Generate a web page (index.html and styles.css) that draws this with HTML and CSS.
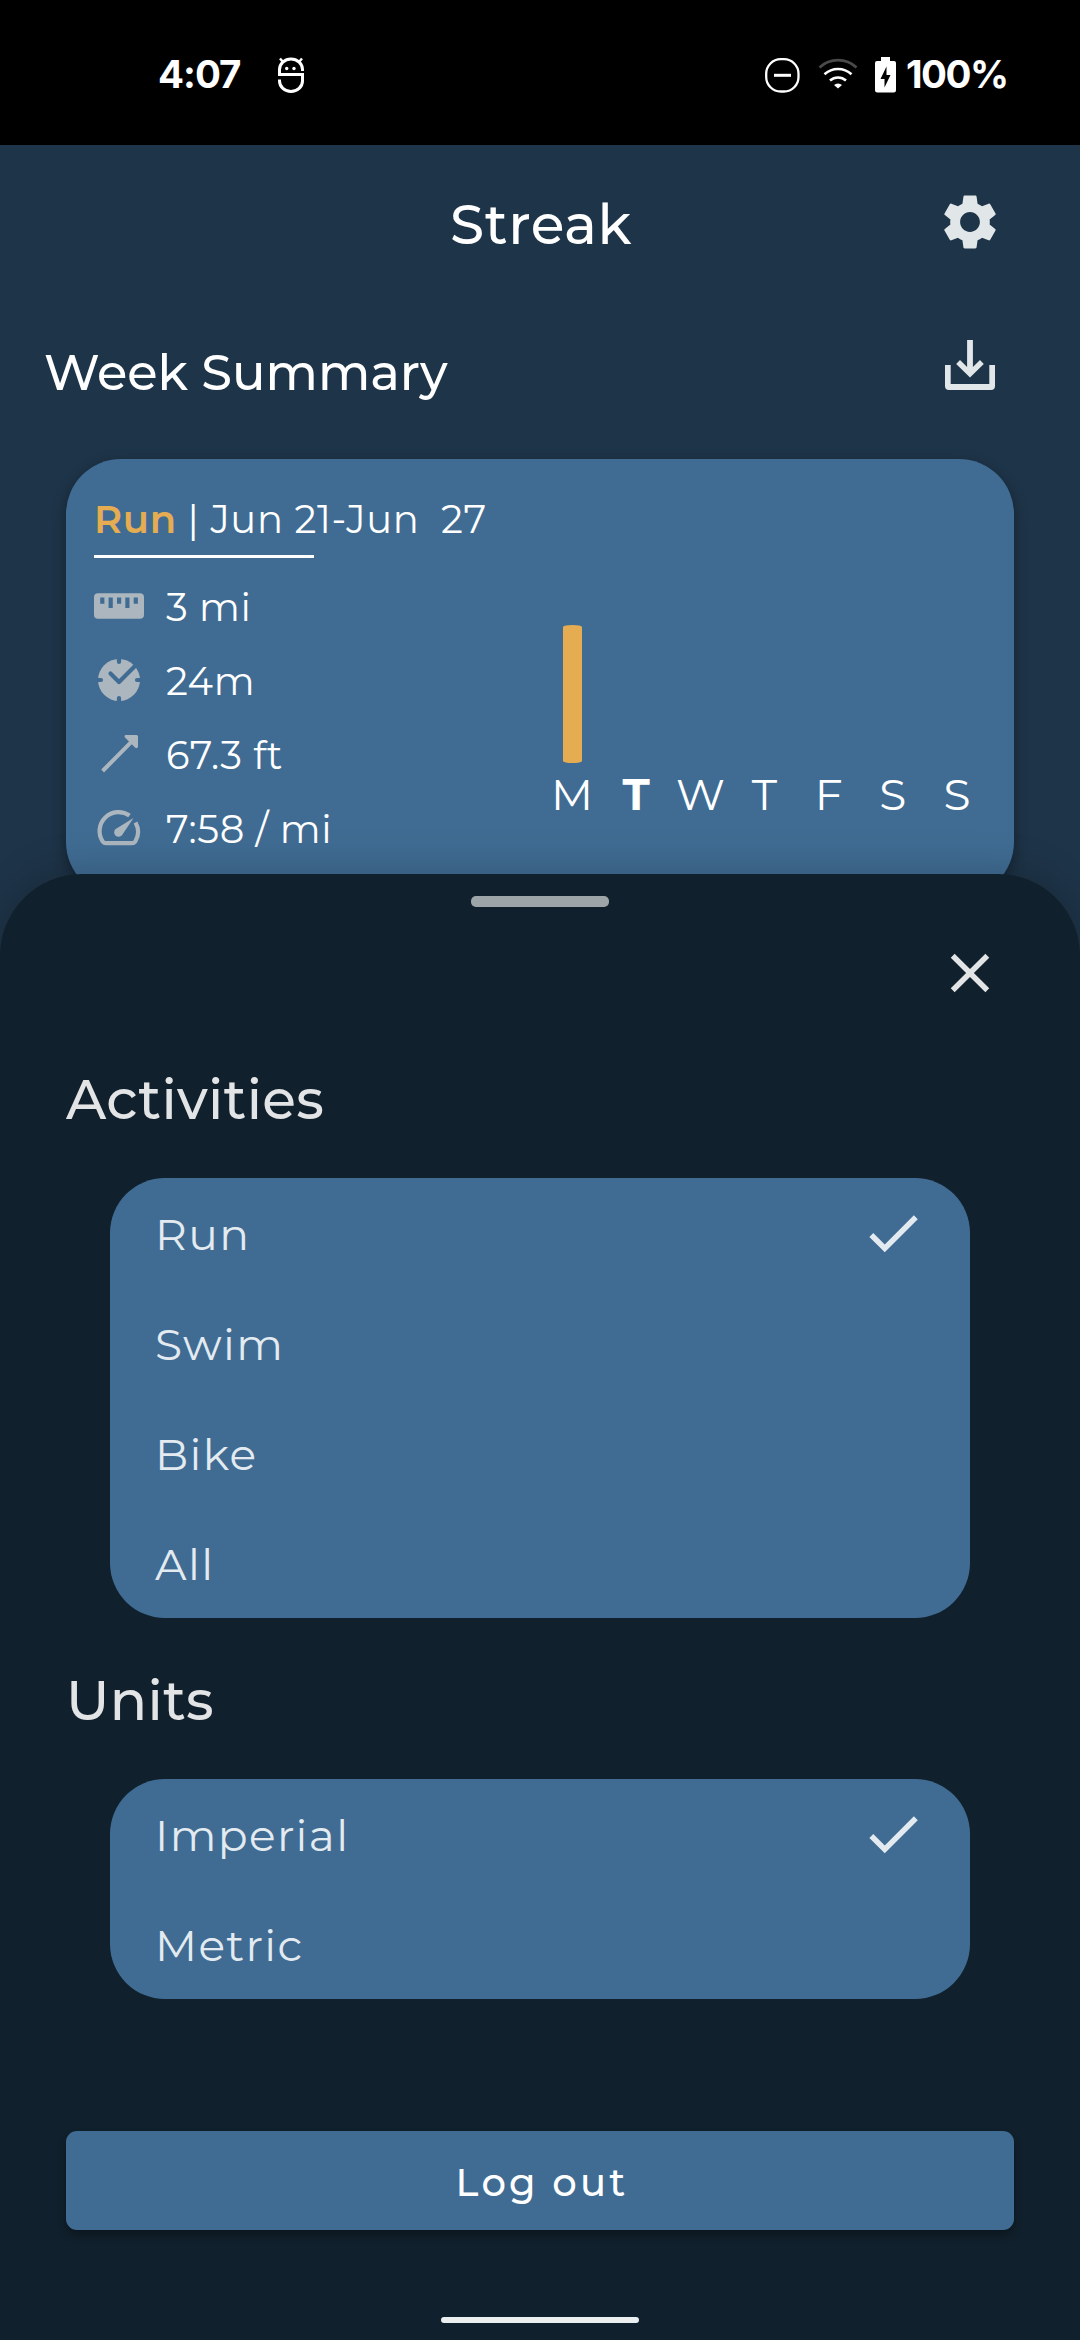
FILE: index.html
```html
<!DOCTYPE html>
<html lang="en">
<head>
<meta charset="utf-8">
<title>Streak</title>
<link rel="stylesheet" href="styles.css">
</head>
<body>
<div class="screen">
  <div class="status">
    <span class="clock">4:07</span>
    <svg class="debug" viewBox="0 0 26 36" width="26" height="36" fill="none" stroke="#fff" stroke-width="3">
      <path d="M24.500 14 V12.500 A11.500 10.500 0 0 0 1.500 12.500 V17.500 H24.500 V24 A11.500 10.500 0 0 1 1.500 24 V22.500"/>
      <path d="M2 1.500 L5.500 5.500 M24 1.500 L20.500 5.500" stroke-width="2.500"/>
      <circle cx="8.700" cy="11.500" r="1.700" fill="#fff" stroke="none"/><circle cx="16" cy="11.500" r="1.700" fill="#fff" stroke="none"/>
    </svg>
    <div class="indicators">
      <svg class="dnd" viewBox="0 0 36 36" width="36" height="36" fill="none" stroke="#fff"><rect x="2.200" y="2.200" width="32.300" height="32.300" rx="14.500" stroke-width="2.300"/><path d="M10 18.300 H27" stroke-width="3"/></svg>
      <svg class="wifi" viewBox="0 0 40 32" width="40" height="32" fill="none" stroke="#fff" stroke-width="2.600">
        <path d="M1.500 9.500 A27 27 0 0 1 38.500 9.500" stroke="#4a4a4a"/>
        <path d="M6.500 16.300 A20 20 0 0 1 33.500 16.300"/><path d="M12 22.500 A12 12 0 0 1 28 22.500"/>
        <path d="M16 27 A6 6 0 0 1 24 27 L20 30.500 Z" fill="#fff" stroke="none"/>
      </svg>
      <svg class="battery" viewBox="0 0 21 36" width="21" height="36"><path fill="#fff" d="M6 0 H15 V4 H19 Q21 4 21 6 V33 Q21 35.500 18.500 35.500 H2.500 Q0 35.500 0 33 V6 Q0 4 2 4 H6Z"/><path d="M11.500 9.500 L5.500 22 H9.500 V30.500 L15.500 18 H11.500Z"/></svg>
      <span class="percent">100%</span>
    </div>
  </div>

  <header class="appbar">
    <h1>Streak</h1>
    <svg class="icon" viewBox="0 0 24 24"><path d="M19.140 12.940c.04-.3.06-.61.06-.94 0-.32-.02-.64-.07-.94l2.030-1.580c.18-.14.23-.41.12-.61l-1.920-3.320c-.12-.22-.37-.29-.59-.22l-2.390.96c-.5-.38-1.030-.7-1.620-.94l-.36-2.540c-.04-.24-.24-.41-.48-.41h-3.840c-.24 0-.43.17-.47.41l-.36 2.540c-.59.24-1.130.57-1.620.94l-2.390-.96c-.22-.08-.47 0-.59.22L2.740 8.870c-.12.21-.08.47.12.61l2.030 1.580c-.05.3-.09.63-.09.94s.02.64.07.94l-2.030 1.580c-.18.14-.23.41-.12.61l1.920 3.320c.12.22.37.29.59.22l2.390-.96c.5.38 1.030.7 1.620.94l.36 2.540c.05.24.24.41.48.41h3.840c.24 0 .44-.17.47-.41l.36-2.540c.59-.24 1.130-.56 1.620-.94l2.390.96c.22.08.47 0 .59-.22l1.920-3.320c.12-.22.07-.47-.12-.61l-2.010-1.580zM12 15.600c-1.980 0-3.600-1.620-3.600-3.600s1.620-3.600 3.600-3.600 3.600 1.620 3.600 3.600-1.620 3.600-3.600 3.600z"/></svg>
  </header>

  <div class="summary-head">
    <h2>Week Summary</h2>
    <svg class="icon" viewBox="0 0 66 66"><path d="M30.100 8 H35.900 V35 L43 28 L46.800 32 L33 45.500 L19.200 32 L23 28 L30.100 35Z"/><path d="M8 33 H13.700 V52 H52.300 V33 H58 V54 Q58 58 54 58 H12 Q8 58 8 54Z"/></svg>
  </div>

  <section class="card">
    <div class="card-title"><b>Run</b> | Jun 21-Jun&nbsp; 27</div>
    <div class="rule"></div>
    <div class="card-body">
      <ul class="stats">
        <li><svg viewBox="0 0 50 50"><path fill-rule="evenodd" d="M4 12.200 H46 Q50 12.200 50 16.200 V33.800 Q50 37.800 46 37.800 H4 Q0 37.800 0 33.800 V16.200 Q0 12.200 4 12.200ZM6.200 16.500v6.300h4.200v-6.300zM14.600 16.500v10.400h4.200v-10.400zM23 16.500v6.300h4.200v-6.300zM31.300 16.500v10.400h4.200v-10.400zM39.700 16.500v6.300h4.200v-6.300z"/></svg>3 mi</li>
        <li><svg viewBox="0 0 50 50"><circle cx="25" cy="25" r="21"/><path class="cut" d="M25 3 V7 M25 43 V47 M3 25 H7 M43 25 H47"/><path class="cut" d="M16.500 18.500 L25 27 L43 9"/></svg>24m</li>
        <li><svg viewBox="0 0 50 50"><path d="M31.500 6 H42.500 Q44 6 44 7.500 V18 Q43 20 41 18.500 L37.800 15.300 L10 43.500 L7.200 40.500 L35 12.500 L31 8.500 Q29.800 6.500 31.500 6Z"/></svg>67.3 ft</li>
        <li><svg viewBox="0 0 50 50"><path class="line" d="M35.500 12.500 A19 19 0 0 0 8.700 38.500 Q10 40.200 12 40.200 H38 Q40 40.200 41.300 38.500 A19 19 0 0 0 41.500 19.500"/><path d="M39.500 15 L21.300 26.300 A4.300 4.300 0 0 0 28 32.300Z"/></svg>7:58 / mi</li>
      </ul>
      <div class="chart">
        <div class="bars"><i class="bar" style="height:138px"></i><i></i><i></i><i></i><i></i><i></i><i></i></div>
        <div class="days"><span>M</span><b>T</b><span>W</span><span>T</span><span>F</span><span>S</span><span>S</span></div>
      </div>
    </div>
  </section>

  <div class="sheet">
    <div class="handle"></div>
    <svg class="icon close" viewBox="0 0 24 24"><path d="M19 6.410 17.590 5 12 10.590 6.410 5 5 6.410 10.590 12 5 17.590 6.410 19 12 13.410 17.590 19 19 17.590 13.410 12z"/></svg>
    <h3>Activities</h3>
    <ul class="options">
      <li>Run<svg viewBox="0 0 24 24"><path d="M9 16.170 4.830 12l-1.420 1.410L9 19 21 7l-1.410-1.410z"/></svg></li>
      <li>Swim</li>
      <li>Bike</li>
      <li>All</li>
    </ul>
    <h3>Units</h3>
    <ul class="options">
      <li>Imperial<svg viewBox="0 0 24 24"><path d="M9 16.170 4.830 12l-1.420 1.410L9 19 21 7l-1.410-1.410z"/></svg></li>
      <li>Metric</li>
    </ul>
    <button class="logout">Log out</button>
    <div class="home"></div>
  </div>
</div>
</body>
</html>
```
FILE: styles.css
```css
* { box-sizing: border-box; }
body { margin: 0; }
h1, h2, h3, ul { margin: 0; padding: 0; font-weight: 500; list-style: none; }
svg { display: block; flex: none; }

.screen {
  position: relative;
  width: 1080px;
  height: 2340px;
  overflow: hidden;
  background: #1e3448;
  color: #fff;
  font-family: Montserrat, Inter, sans-serif;
}

.status {
  display: flex;
  align-items: flex-start;
  height: 145px;
  padding: 57px 72px 0 158px;
  background: #000;
  font: 700 38.5px/34px Inter, sans-serif;
  letter-spacing: -1px;
}
.clock { width: 83px; }
.debug { margin-left: 37px; }
.indicators { display: flex; margin-left: auto; }
.wifi { margin: 1px 0 0 18px; }
.battery { margin-left: 17px; }
.percent { width: 102px; margin-left: 10px; letter-spacing: -1.5px; }

.icon { width: 66px; height: 66px; fill: #e1e6e9; }

.appbar {
  display: grid;
  grid-template-columns: 1fr auto 1fr;
  align-items: center;
  height: 154px;
  padding: 0 77px;
}
.appbar h1 { grid-column: 2; padding: 6px 0 0 2px; font-size: 55px; line-height: 68px; letter-spacing: .6px; }
.appbar .icon { justify-self: end; }

.summary-head {
  display: flex;
  justify-content: space-between;
  align-items: center;
  height: 132px;
  margin-bottom: 28px;
  padding: 0 77px 0 44px;
}
.summary-head h2 { padding-top: 14px; font-size: 49.5px; line-height: 60px; }

.card {
  height: 438px;
  margin: 0 66px;
  padding: 37px 25px 0 28px;
  border-radius: 55px;
  background: #406c93;
  box-shadow: 0 5px 14px rgba(0, 0, 0, .35);
}
.card-title { font-size: 38.5px; line-height: 47px; letter-spacing: .69px; white-space: pre; }
.card-title b { color: #e5ac52; font-weight: 600; }
.rule { width: 220px; height: 3px; margin: 12px 0; background: #fff; }
.card-body { display: flex; justify-content: space-between; height: 296px; }
.stats { font-size: 38.5px; letter-spacing: .6px; font-weight: 400; }
.stats li { display: flex; align-items: center; gap: 22px; height: 74px; font-weight: 400; }
.stats svg { width: 50px; height: 50px; margin-top: -2px; fill: #acb6bf; }
.stats .cut { fill: none; stroke: #406c93; stroke-width: 4.2px; stroke-linecap: round; stroke-linejoin: round; }
.stats .line { fill: none; stroke: #acb6bf; stroke-width: 4.2px; }

.chart { display: flex; flex-direction: column; justify-content: flex-end; width: 449px; padding-bottom: 45px; }
.bars, .days { display: grid; grid-template-columns: repeat(7, 1fr); justify-items: center; align-items: end; }
.bars { margin-bottom: 4px; }
.bar { width: 19px; border-radius: 50% / 2px; background: #e5ac52; }
.days { font-size: 44px; line-height: 54px; }

/* Settings sheet slides up over the page */
.sheet {
  position: absolute;
  inset: 874px 0 0;
  display: flex;
  flex-direction: column;
  align-items: center;
  padding: 22px 66px 17px;
  border-radius: 82px 82px 0 0;
  background: #10202c;
  box-shadow: 0 0 44px rgba(0, 0, 0, .22);
}
.handle { flex: none; width: 138px; height: 11px; border-radius: 5px; background: #9ea5a9; }
.close { align-self: flex-end; margin: 33px 11px 60px 0; fill: #e2e4e6; }
.sheet h3 { align-self: flex-start; color: #e2e4e6; font-size: 55px; line-height: 68px; letter-spacing: .3px; }
.options {
  width: 860px;
  margin: 44px 0 49px;
  border-radius: 55px;
  background: #406c93;
  color: #e3ebf1;
  font-size: 44px;
  font-weight: 400;
  letter-spacing: 1.38px;
}
.options li { display: flex; justify-content: space-between; align-items: center; height: 110px; padding: 1px 44px 0 45px; font-weight: 400; }
.options svg { width: 66px; height: 66px; margin-top: -2px; fill: #e3ebf1; }
.logout {
  width: 948px;
  height: 99px;
  margin-top: 83px;
  padding: 3px 0 0 4px;
  border: 0;
  border-radius: 11px;
  background: #406c93;
  box-shadow: 0 5px 8px rgba(0, 0, 0, .3);
  color: #fff;
  font: 500 38.5px/47px Montserrat, Inter, sans-serif;
  letter-spacing: 3.2px;
}
.home { width: 198px; height: 6px; margin-top: auto; border-radius: 3px; background: #ebefef; }
```
